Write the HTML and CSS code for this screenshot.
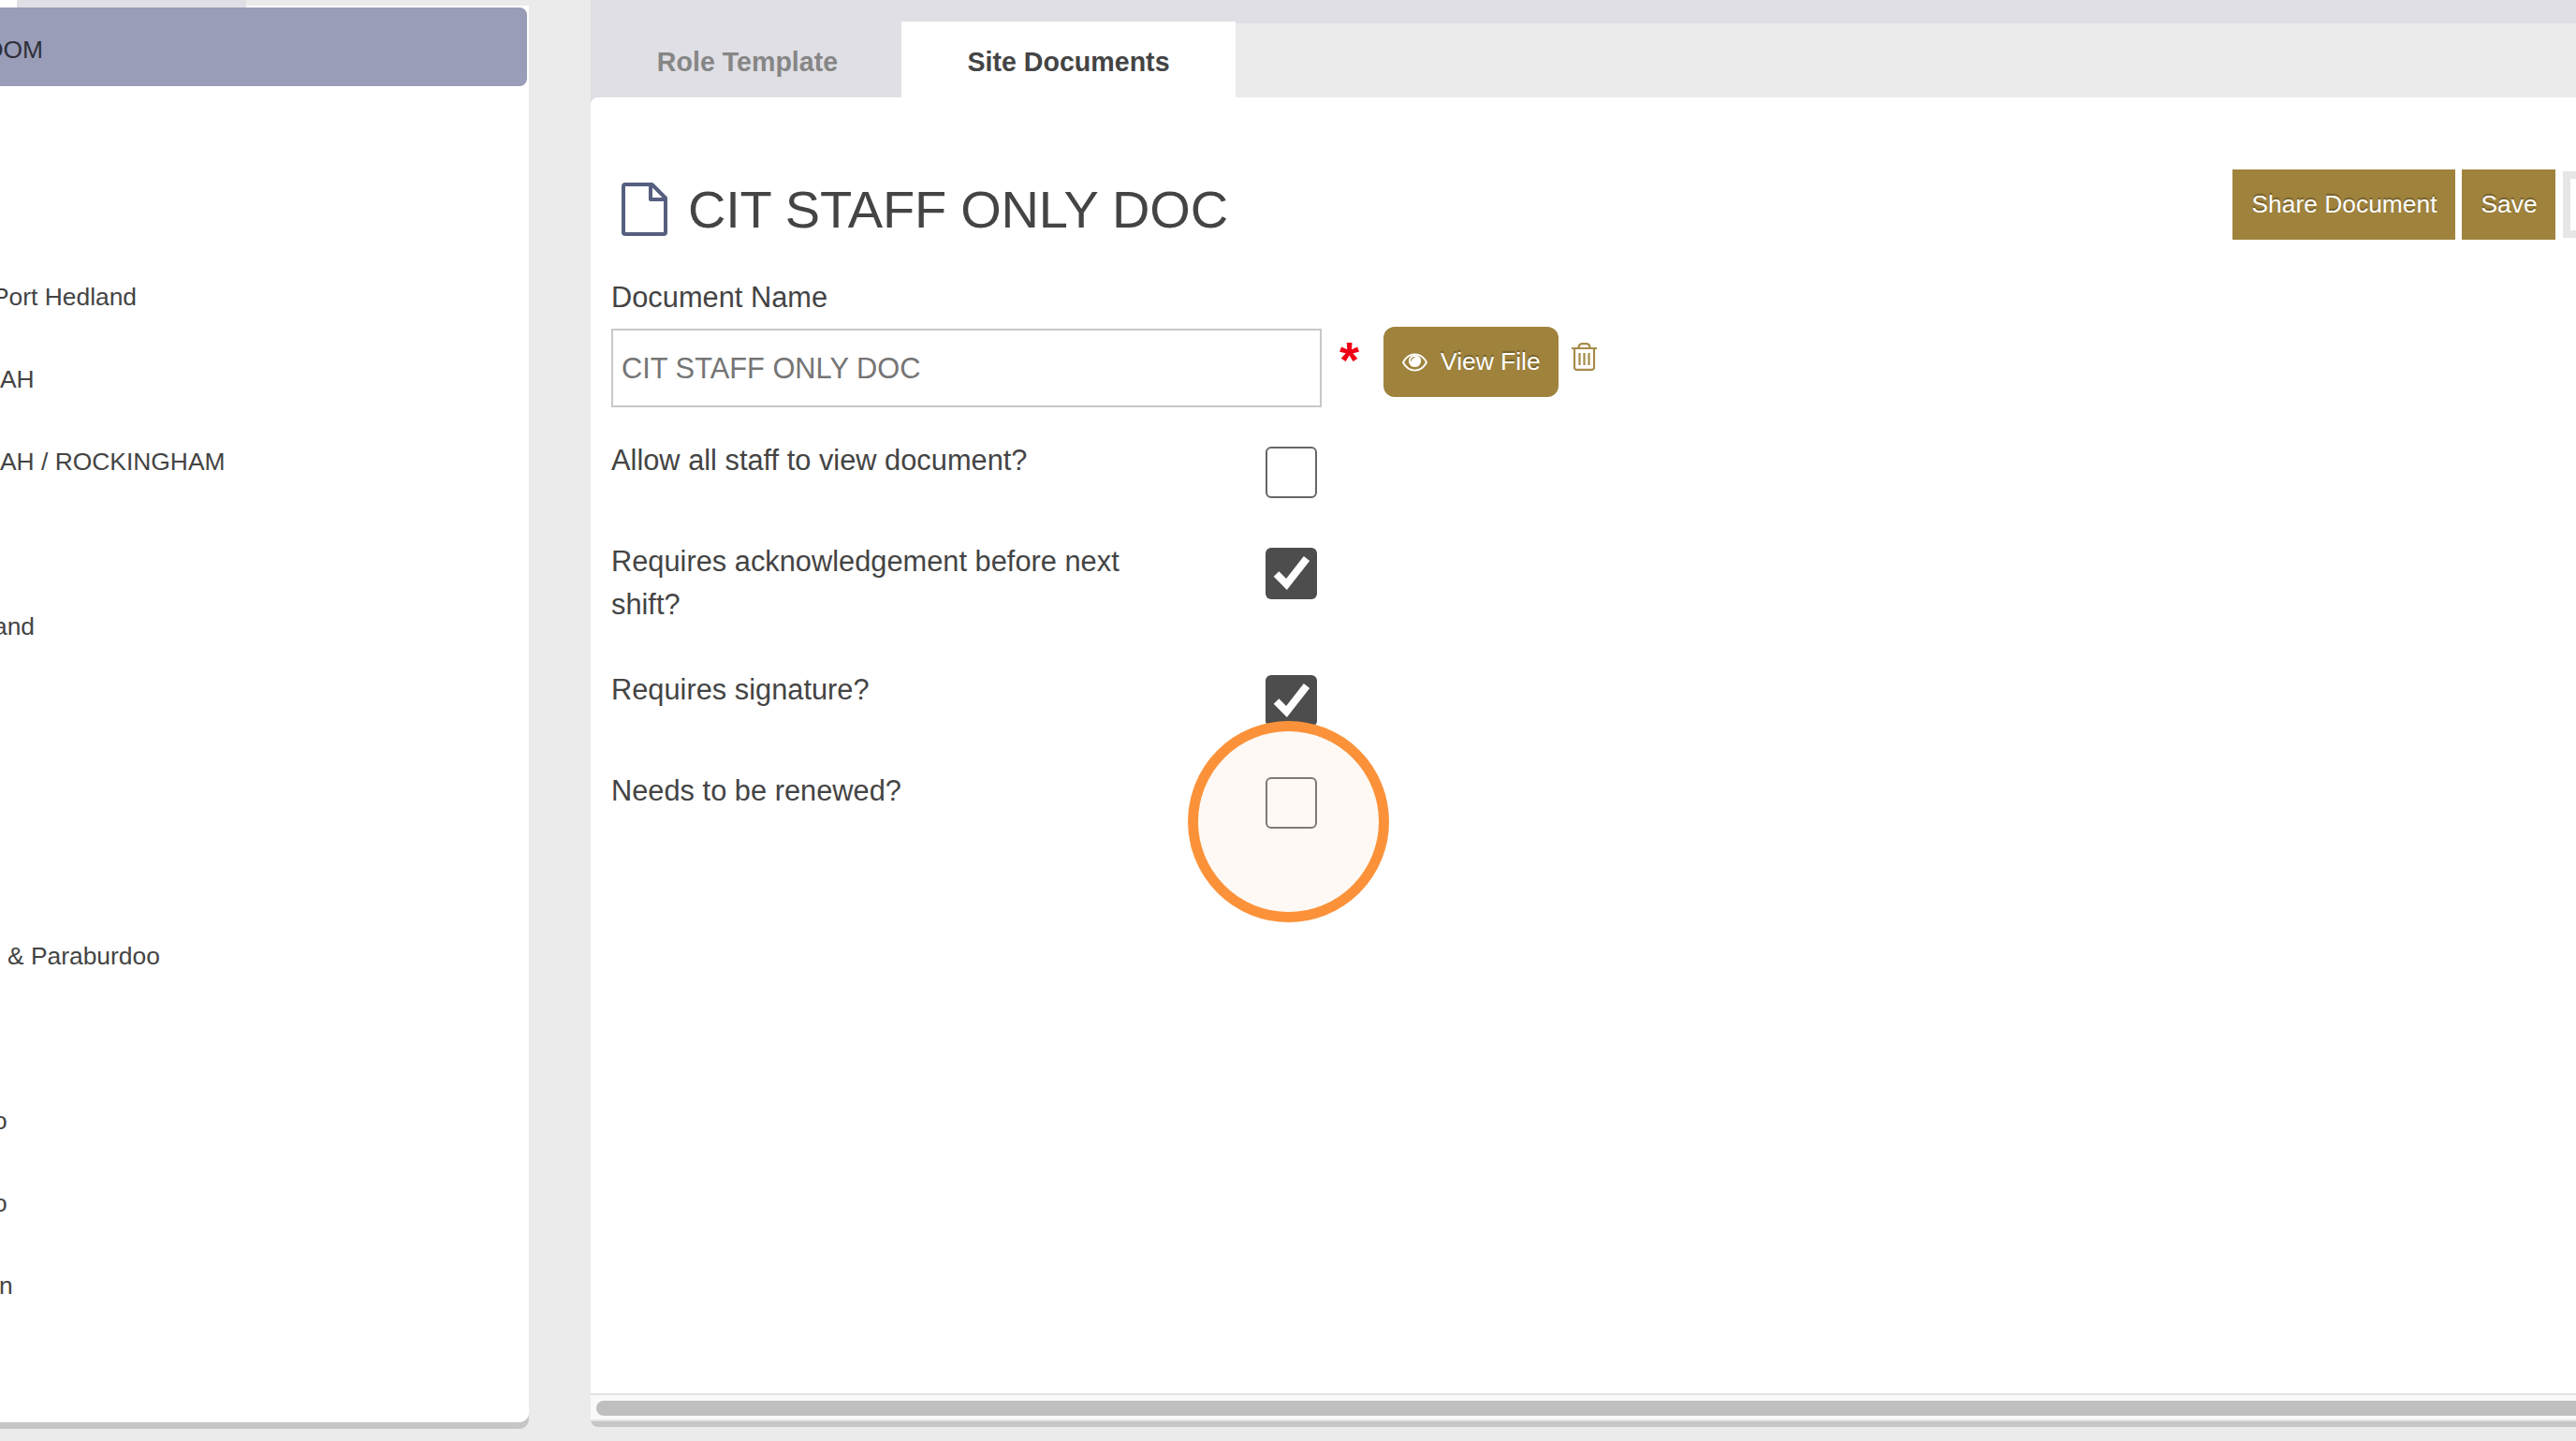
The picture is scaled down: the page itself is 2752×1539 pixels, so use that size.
FILE: index.html
```html
<!DOCTYPE html>
<html lang="en">
<head>
<meta charset="utf-8">
<title>Site Documents</title>
<link rel="stylesheet" href="styles.css">
</head>
<body>
<div class="app">
  <aside class="sidebar">
    <div class="side-tab"></div>
    <ul class="sites">
      <li class="site selected"><span class="cut-oom">OOM</span></li>
      <li class="site"></li>
      <li class="site"></li>
      <li class="site"><span class="cut-port">Port Hedland</span></li>
      <li class="site"><span>AH</span></li>
      <li class="site"><span>AH / ROCKINGHAM</span></li>
      <li class="site"></li>
      <li class="site"><span class="cut-and">and</span></li>
      <li class="site"></li>
      <li class="site"></li>
      <li class="site"></li>
      <li class="site"><span class="cut-amp">&amp; Paraburdoo</span></li>
      <li class="site"></li>
      <li class="site"><span class="cut-o">o</span></li>
      <li class="site"><span class="cut-o">o</span></li>
      <li class="site"><span class="cut-n">n</span></li>
    </ul>
  </aside>
  <main class="main">
    <nav class="tabs">
      <div class="tab">Role Template</div>
      <div class="tab active">Site Documents</div>
      <div class="tab-rest"></div>
    </nav>
    <section class="panel">
      <header class="head">
        <svg class="file-icon" viewBox="0 0 49 57" fill="none" stroke="#565f7f" stroke-width="4" stroke-linejoin="round"><path d="M4 2H32.500L47 16.500V53a2 2 0 0 1-2 2H4a2 2 0 0 1-2-2V4a2 2 0 0 1 2-2Z"/><path d="M31 2V18H47"/></svg>
        <h1 class="title">CIT STAFF ONLY DOC</h1>
        <div class="actions">
          <button class="btn share">Share Document</button>
          <button class="btn save">Save</button>
          <span class="box-btn"></span>
        </div>
      </header>
      <label class="label name-label">Document Name</label>
      <div class="name-row">
        <div class="input">CIT STAFF ONLY DOC</div>
        <span class="star">*</span>
        <button class="btn view">
          <svg class="eye" viewBox="0 0 27 20"><path d="M1 10C7-1.5 20-1.5 26 10C20 21.500 7 21.500 1 10Z" fill="none" stroke="#fff" stroke-width="1.900"/><circle cx="13.500" cy="8.500" r="6.600" fill="#fff"/><path d="M9.500 8.500a4 4 0 0 1 4-4" fill="none" stroke="#9f833d" stroke-width="1.200"/></svg>
          <span>View File</span>
        </button>
        <svg class="trash" viewBox="0 0 27 30" fill="none" stroke="#a68b48" stroke-width="2.200"><path d="M0 6H27M7.500 6C7.500 2.500 9 1.100 11 1.100H16C18 1.100 19.500 2.500 19.500 6M3 6V26.400a2.500 2.500 0 0 0 2.500 2.500H21.500a2.500 2.500 0 0 0 2.500-2.500V6M8.500 11V24M13.500 11V24M18.500 11V24"/></svg>
      </div>
      <div class="row r1"><div class="label">Allow all staff to view document?</div><span class="check"></span></div>
      <div class="row r2"><div class="label">Requires acknowledgement before next shift?</div><span class="check on"><svg viewBox="0 0 55 55"><path d="M11.500 28 22.500 39 44 11.500" fill="none" stroke="#fff" stroke-width="8"/></svg></span></div>
      <div class="row r3"><div class="label">Requires signature?</div><span class="check on"><svg viewBox="0 0 55 55"><path d="M11.500 28 22.500 39 44 11.500" fill="none" stroke="#fff" stroke-width="8"/></svg></span></div>
      <div class="row r4"><div class="label">Needs to be renewed?</div><span class="check"><i class="ring"></i></span></div>
      <div class="scroll"><div class="thumb"></div></div>
    </section>
  </main>
</div>
</body>
</html>
```
FILE: styles.css
```css
* { box-sizing: border-box; }
body {
  margin: 0;
  background: #ebebeb;
  color: #444;
  font-family: "Liberation Sans", Arial, sans-serif;
  overflow: hidden;
}
.app { display: flex; gap: 66px; height: 1539px; overflow: hidden; }

.sidebar {
  width: 565px;
  height: 1519px;
  background: linear-gradient(#ebebeb 6px, #fff 6px);
  border-radius: 0 0 10px 0;
  box-shadow: 0 7px 0 #c6c6c6;
  overflow: hidden;
  flex: none;
}
.side-tab { width: 263px; height: 9px; border-left: 18px solid #fff; background: #e0dfe5; }
.sites { list-style: none; margin: -1px 0 0; padding: 0; }
.site {
  height: 84px;
  width: 563px;
  margin-bottom: 4px;
  padding-top: 6px;
  display: flex;
  align-items: center;
  font-size: 26.4px;
  white-space: nowrap;
}
.selected { background: #999db7; border-radius: 0 8px 8px 0; color: #2e303b; }
.cut-oom { margin-left: -17px; }
.cut-port { margin-left: -8px; }
.cut-and { margin-left: -7px; }
.cut-amp { margin-left: 8px; }
.cut-o { margin-left: -7px; }
.cut-n { margin-left: -1px; }

.main { flex: 1; height: 1518px; display: flex; flex-direction: column; background: #e0dfe5; border-radius: 0 0 0 8px; box-shadow: 0 6px 0 #c6c6c6; }
.tabs { display: flex; height: 104px; padding-top: 23px; flex: none; }
.tab { width: 332px; padding-left: 3px; text-align: center; font-size: 28.6px; font-weight: 700; line-height: 86px; height: 81px; color: #868686; }
.tab.active { width: 357px; padding-left: 0; background: #fff; color: #444; }
.tab-rest { flex: 1; margin-top: 2px; background: #ebebeb; }

.panel { flex: 1; background: #fff; border-radius: 8px 0 0 0; display: flex; flex-direction: column; }
.head { display: flex; height: 152px; padding: 77px 0 0 33px; }
.file-icon { width: 49px; height: 57px; margin-top: 14px; flex: none; }
.title { margin: 11px 0 0 22px; font-weight: 400; font-size: 56px; line-height: 64px; letter-spacing: -0.22px; white-space: nowrap; flex: none; }
.actions { margin-left: auto; display: flex; gap: 7px; }
.btn { border: 0; padding: 0; height: 75px; background: #9f833d; color: #fff; font: 26.4px "Liberation Sans", Arial, sans-serif; text-shadow: 0 -2px 1px rgba(0, 0, 0, .28); }
.share { width: 238px; padding-left: 1px; }
.save { width: 100px; padding-left: 1px; }
.box-btn { width: 14px; height: 71px; margin: 2px 0 0 1px; border: 8px solid #e6e6e6; border-right: 0; }

.label { font-size: 30.8px; line-height: 46px; }
.name-label { margin: 39px 0 0 22px; height: 56px; }
.name-row { display: flex; margin-left: 22px; height: 84px; }
.input { width: 759px; height: 84px; border: 2px solid #c8c8c8; padding-left: 9px; font-size: 30.8px; line-height: 82px; color: #757575; }
.star { width: 66px; padding-left: 19px; color: #f00014; font-weight: 700; font-size: 54px; line-height: 60px; margin-top: 3px; }
.view { width: 187px; border-radius: 12px; margin-top: -2px; display: flex; align-items: center; padding: 0 0 0 20px; }
.eye { width: 27px; height: 20px; margin-right: 14px; }
.trash { width: 27px; height: 30px; margin: 15px 0 0 14px; }

.row { display: flex; justify-content: space-between; margin-left: 22px; width: 754px; }
.row .label { width: 600px; }
.r1 { margin-top: 34px; height: 108px; }
.r2 { height: 136px; }
.r3 { height: 109px; }
.r3 .label { padding-top: 1px; }
.check { position: relative; width: 55px; height: 55px; margin-top: 8px; border: 2px solid #666; border-radius: 6px; flex: none; }
.check.on { background: #4d4d4d; border: 0; }
.check svg { display: block; width: 55px; height: 55px; }
.ring { position: absolute; left: -85px; top: -62px; width: 215px; height: 215px; border: 11px solid #fb923a; border-radius: 50%; background: rgba(249, 220, 196, .17); background-clip: padding-box; }

.scroll { margin-top: auto; height: 30px; border-top: 2px solid #e2e2e2; border-bottom: 2px solid #e2e2e2; background: #f9f9f9; padding: 6px 0 0 6px; }
.thumb { height: 16px; background: #bfbfbf; border-radius: 8px 0 0 8px; }
```
